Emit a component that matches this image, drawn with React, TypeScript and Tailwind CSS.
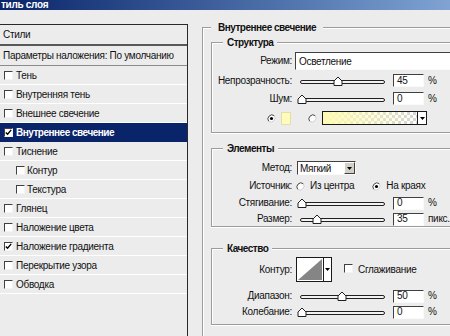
import React from "react";

type Kid = { children?: React.ReactNode };

const Check = ({ checked = false }: { checked?: boolean }) => (
  <span className="inline-flex h-[9px] w-[9px] shrink-0 items-center justify-center border border-t-[#404040] border-l-[#404040] border-r-[#f4f4f4] border-b-[#f4f4f4] bg-white">
    {checked && (
      <svg width="7" height="7" viewBox="0 0 7 7">
        <path d="M0.8 3.4 L2.6 5.3 L6.2 0.9" fill="none" stroke="#000" strokeWidth="1.4" />
      </svg>
    )}
  </span>
);

const Radio = ({ on = false }: { on?: boolean }) => (
  <svg width="9" height="9" viewBox="0 0 9 9" className="shrink-0">
    <circle cx="4.5" cy="4.5" r="4" fill="#fff" />
    <path d="M1.7 7.3 A4 4 0 0 1 7.3 1.7" fill="none" stroke="#404040" strokeWidth="1" />
    <path d="M7.3 1.7 A4 4 0 0 1 1.7 7.3" fill="none" stroke="#c8c8c8" strokeWidth="1" />
    {on && <circle cx="4.5" cy="4.5" r="1.6" fill="#000" />}
  </svg>
);

// track runs from x=4 to x=88 inside the svg
const Slider = ({ at }: { at: number }) => (
  <svg width="94" height="10" viewBox="0 0 94 10" className="ml-[4px] shrink-0">
    <rect x="4.5" y="4.5" width="84" height="3" rx="1.5" fill="#f2f2f2" stroke="#202020" />
    <path
      d={`M${at - 4} 9.5 L${at + 4} 9.5 L${at + 4} 5 L${at} 1 L${at - 4} 5 Z`}
      fill="#fff"
      stroke="#202020"
    />
  </svg>
);

const NumBox = ({ v }: { v: string }) => (
  <div className="ml-[3px] flex h-[13px] w-[31px] shrink-0 items-center border border-t-[#404040] border-l-[#404040] border-r-[#fafafa] border-b-[#fafafa] bg-white pl-[3px] text-[10px] leading-none">
    {v}
  </div>
);

const Label = ({ children }: Kid) => (
  <div className="w-[80px] shrink-0 text-right leading-none">{children}</div>
);

const SliderRow = ({ label, at, v, unit = "%", className = "" }: { label: string; at: number; v: string; unit?: string; className?: string }) => (
  <div className={`flex h-[12px] items-center ${className}`}>
    <Label>{label}</Label>
    <Slider at={at} />
    <NumBox v={v} />
    <span className="ml-[4px] leading-none">{unit}</span>
  </div>
);

const Group = ({ title, className = "", children }: Kid & { title: string; className?: string }) => (
  <div className={`border-t border-l border-b border-[#9c9c9c] shadow-[inset_1px_1px_0_#fff,0_1px_0_#fff] ${className}`}>
    <div className="-mt-[6px] ml-[11px] w-fit bg-[#ececec] px-[4px] font-bold leading-[12px] tracking-[-0.5px]">{title}</div>
    {children}
  </div>
);

const items: { t: string; on?: boolean; sub?: boolean; sel?: boolean }[] = [
  { t: "Тень" },
  { t: "Внутренняя тень" },
  { t: "Внешнее свечение" },
  { t: "Внутреннее свечение", on: true, sel: true },
  { t: "Тиснение" },
  { t: "Контур", sub: true },
  { t: "Текстура", sub: true },
  { t: "Глянец" },
  { t: "Наложение цвета" },
  { t: "Наложение градиента", on: true },
  { t: "Перекрытие узора" },
  { t: "Обводка" },
];

const DownTri = () => (
  <svg width="5" height="3" viewBox="0 0 5 3">
    <path d="M0 0 L5 0 L2.5 3 Z" fill="#000" />
  </svg>
);

export default function App() {
  return (
    <div className="h-[336px] w-[450px] overflow-hidden bg-[#ececec] font-['Liberation_Sans',Arial,sans-serif] text-[10px] tracking-[-0.3px] text-[#111]">
      {/* title bar, cropped */}
      <div className="flex h-[10px] items-center bg-gradient-to-r from-[#0a246a] to-[#80a3d4] pl-[1px] text-[10px] font-bold leading-none text-white">
        тиль слоя
      </div>

      <div className="flex">
        {/* styles list */}
        <div className="mt-[14px] h-[312px] w-[188px] shrink-0 border-t border-r border-[#2a2a2a]">
          <div className="flex h-[21px] items-center border-b-2 border-[#585858] pl-[3px]">Стили</div>
          <div className="flex h-[20px] items-center border-b border-[#8c8c8c] pl-[3px]">
            Параметры наложения: По умолчанию
          </div>
          {items.map((it) => (
            <div
              key={it.t}
              className={`flex h-[19px] items-center border-b ${
                it.sel ? "border-[#0a246a] bg-[#0a246a] font-bold tracking-[-0.5px] text-white" : "border-white"
              } ${it.sub ? "pl-[16px]" : "pl-[4px]"}`}
            >
              <Check checked={it.on} />
              <span className={it.sub ? "ml-[2px]" : "ml-[3px]"}>{it.t}</span>
            </div>
          ))}
        </div>

        {/* settings */}
        <div className="ml-[14px] mt-[17px] w-[290px] shrink-0 border-t border-l border-[#9c9c9c] pl-[8px] shadow-[inset_1px_1px_0_#fff]">
          <div className="-mt-[6px] w-fit bg-[#ececec] px-[7px] font-bold leading-[12px] tracking-[-0.5px]">Внутреннее свечение</div>

          <Group title="Структура" className="mt-[8px] pb-[7px]">
            <div className="mt-[3px] flex h-[18px] items-center">
              <Label>Режим:</Label>
              <div className="ml-[3px] flex h-[18px] flex-1 items-center border border-t-[#404040] border-l-[#404040] border-r-[#fafafa] border-b-[#fafafa] bg-white pl-[3px]">
                Осветление
              </div>
            </div>
            <SliderRow label="Непрозрачность:" at={42} v="45" className="mt-[4px] h-[13px]" />
            <SliderRow label="Шум:" at={6} v="0" className="mt-[5px] h-[13px]" />
            <div className="mt-[6px] flex h-[14px] items-center pl-[55px]">
              <Radio on />
              <div className="ml-[5px] h-[13px] w-[10px] border border-[#e2dfa8] bg-[#fffbbb]" />
              <div className="ml-[17px]">
                <Radio />
              </div>
              <div className="ml-[5px] flex h-[14px] w-[105px] border border-[#1a1a1a]">
                <svg width="94" height="12" viewBox="0 0 94 12">
                  <defs>
                    <pattern id="chk" width="6" height="6" patternUnits="userSpaceOnUse">
                      <rect width="6" height="6" fill="#fff" />
                      <rect width="3" height="3" fill="#d4d4d4" />
                      <rect x="3" y="3" width="3" height="3" fill="#d4d4d4" />
                    </pattern>
                    <linearGradient id="glow" x1="0" x2="1" y1="0" y2="0">
                      <stop offset="0" stopColor="#fffbb4" stopOpacity="1" />
                      <stop offset="1" stopColor="#fffbb4" stopOpacity="0" />
                    </linearGradient>
                  </defs>
                  <rect width="94" height="12" fill="url(#chk)" />
                  <rect width="94" height="12" fill="url(#glow)" />
                </svg>
                <div className="flex flex-1 items-center justify-center border-l border-[#1a1a1a] bg-white">
                  <DownTri />
                </div>
              </div>
            </div>
          </Group>

          <Group title="Элементы" className="mt-[15px] pb-[1px]">
            <div className="mt-[6px] flex h-[14px] items-center">
              <Label>Метод:</Label>
              <div className="ml-[5px] flex h-[14px] w-[59px] border border-t-[#404040] border-l-[#404040] border-r-[#fafafa] border-b-[#fafafa] bg-white">
                <span className="flex flex-1 items-center pl-[2px]">Мягкий</span>
                <div className="flex w-[11px] items-center justify-center border border-t-[#fff] border-l-[#fff] border-r-[#404040] border-b-[#404040] bg-[#d4d0c8]">
                  <DownTri />
                </div>
              </div>
            </div>
            <div className="mt-[5px] flex h-[12px] items-center">
              <Label>Источник:</Label>
              <div className="ml-[4px]">
                <Radio />
              </div>
              <span className="ml-[5px] leading-none">Из центра</span>
              <div className="ml-[18px]">
                <Radio on />
              </div>
              <span className="ml-[5px] leading-none">На краях</span>
            </div>
            <SliderRow label="Стягивание:" at={6} v="0" className="mt-[5px]" />
            <SliderRow label="Размер:" at={21} v="35" unit="пикс." className="mt-[4px]" />
          </Group>

          <Group title="Качество" className="mt-[21px] pb-[6px]">
            <div className="mt-[2px] flex h-[25px] items-center">
              <Label>Контур:</Label>
              <div className="ml-[4px] flex h-[25px] w-[36px] border border-[#1a1a1a] bg-white">
                <svg width="26" height="23" viewBox="0 0 26 23">
                  <path d="M1 22 L25 1 L25 22 Z" fill="#858585" />
                </svg>
                <div className="flex flex-1 items-center justify-center border-l border-[#1a1a1a]">
                  <DownTri />
                </div>
              </div>
              <div className="ml-[12px]">
                <Check />
              </div>
              <span className="ml-[5px] leading-none">Сглаживание</span>
            </div>
            <SliderRow label="Диапазон:" at={46} v="50" className="mt-[8px]" />
            <SliderRow label="Колебание:" at={6} v="0" className="mt-[4px]" />
          </Group>
        </div>
      </div>
    </div>
  );
}
